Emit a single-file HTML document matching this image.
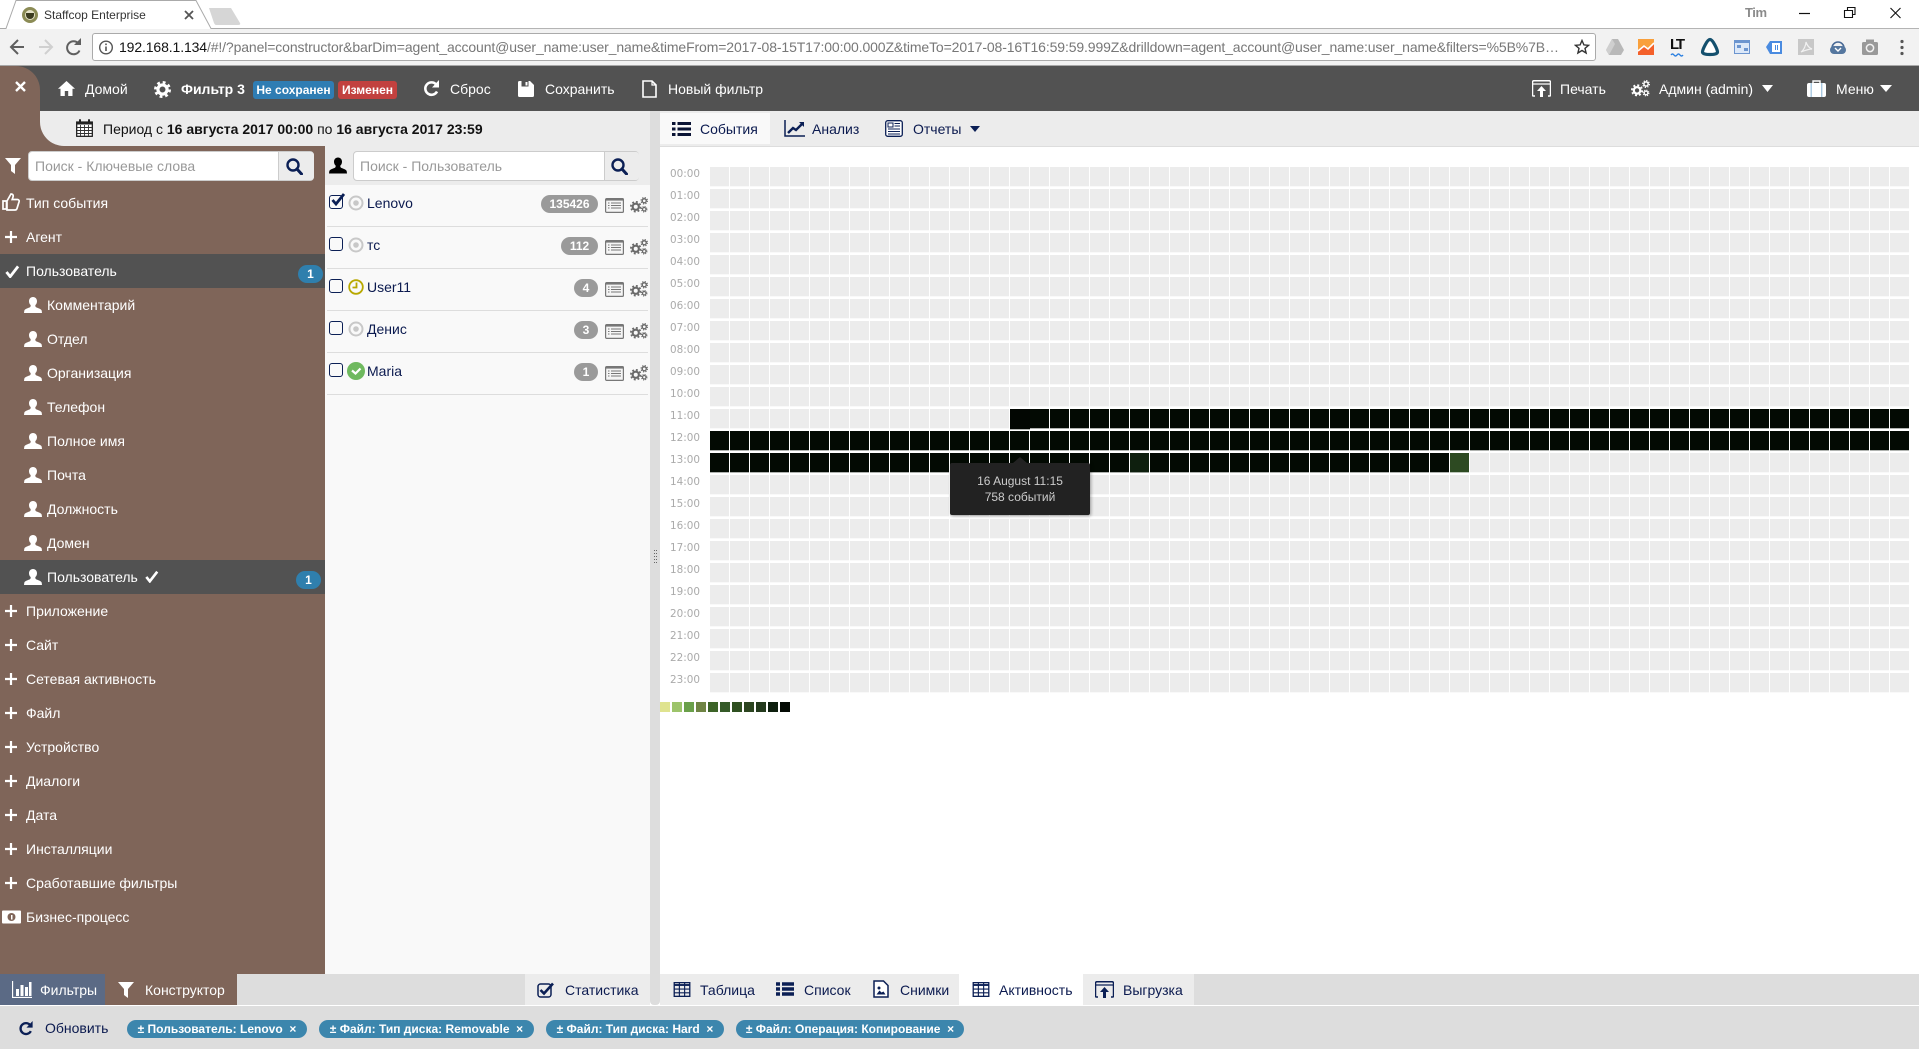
<!DOCTYPE html>
<html lang="ru"><head><meta charset="utf-8"><title>Staffcop Enterprise</title>
<style>
html,body{margin:0;padding:0;width:1919px;height:1049px;overflow:hidden;background:#fff}
body{position:relative;font-family:"Liberation Sans",Arial,sans-serif;font-size:14px;color:#0b1a4f}
.a,.t,svg.i{position:absolute}
.t{white-space:nowrap;line-height:20px;height:20px}
.w{color:#fff}.b{font-weight:bold}
.n{color:#0b1f55}
.s{color:#fff}
.badge{position:absolute;height:18px;line-height:18px;border-radius:3px;color:#fff;font-size:12px;font-weight:bold;text-align:center;top:81px}
.g{position:absolute;height:18px;line-height:19px;background:#9a9a9a;color:#fff;font-size:12px;font-weight:bold;text-align:center;border-radius:9px}
.c{position:absolute;top:1020px;height:18px;line-height:18px;background:#3c86ad;color:#fff;font-size:12px;font-weight:bold;border-radius:9px;text-align:center;white-space:nowrap}
.h{position:absolute;left:670px;color:#aaa;font-family:"DejaVu Sans",sans-serif;font-size:10.4px;line-height:14px;height:14px}
.cb{position:absolute;left:329px;width:12px;height:12px;border:1.5px solid #0b1f55;border-radius:3px}
.sep{position:absolute;left:327px;width:321px;height:1px;background:#ddd}
.ct{position:absolute;left:298px;width:25px;height:18px;line-height:18px;border-radius:9px;background:#2f7fad;color:#fff;font-size:12px;font-weight:bold;text-align:center}
</style></head><body>
<svg width="0" height="0" style="position:absolute"><defs>
<symbol id="user" viewBox="0 0 18 16"><path fill="currentColor" d="M9 0C6.500 0 5 1.900 5 4.200c0 1.600.7 3 1.600 3.800.2.900.1 1.500-.5 2.100C4.700 11.100 1 11.500.3 13.600L0 16h18l-.3-2.400c-.7-2.100-4.400-2.500-5.800-3.500-.6-.6-.7-1.200-.5-2.100.9-.8 1.600-2.200 1.600-3.800C13 1.900 11.500 0 9 0z"/></symbol>
<symbol id="gear" viewBox="0 0 16 16"><circle cx="8" cy="8" r="4.300" fill="none" stroke="currentColor" stroke-width="3"/><circle cx="8" cy="8" r="6.800" fill="none" stroke="currentColor" stroke-width="2.400" stroke-dasharray="2.670 2.670"/></symbol>
<symbol id="gears" viewBox="0 0 18 16"><use href="#gear" x="0" y="4" width="11.500" height="11.500"/><use href="#gear" x="10.500" y="0" width="7.500" height="7.500"/><use href="#gear" x="11" y="9" width="6.500" height="6.500"/></symbol>
<symbol id="search" viewBox="0 0 17 17"><circle cx="7" cy="7" r="5.500" fill="none" stroke="currentColor" stroke-width="2.400"/><path d="M11 11l4.500 5" stroke="currentColor" stroke-width="3" stroke-linecap="round"/></symbol>
<symbol id="funnel" viewBox="0 0 16 16"><path fill="currentColor" d="M0 0h16l-6 7v9l-4-3V7z"/></symbol>
<symbol id="plus" viewBox="0 0 12 12"><path d="M6 0v12M0 6h12" stroke="currentColor" stroke-width="2.200"/></symbol>
<symbol id="check" viewBox="0 0 16 14"><path d="M1.500 7.500l4 5L14 1.500" fill="none" stroke="currentColor" stroke-width="3"/></symbol>
<symbol id="lbox" viewBox="0 0 19 15"><rect x=".6" y=".6" width="17.800" height="13.800" rx="1" fill="#f5f5f5" stroke="#777" stroke-width="1.200"/><rect x=".6" y=".6" width="17.800" height="2" fill="#777"/><path d="M3 5h1.500M3 7.500h1.500M3 10h1.500M6 5h10M6 7.500h10M6 10h10" stroke="#777" stroke-width="1.100"/></symbol>
<symbol id="table" viewBox="0 0 18 16"><rect x=".7" y=".7" width="16.600" height="14.600" fill="none" stroke="currentColor" stroke-width="1.400"/><path d="M.7 3.200h16.600" stroke="currentColor" stroke-width="2"/><path d="M6.200 1v14M11.800 1v14M1 7.500h16M1 11.500h16" stroke="currentColor" stroke-width="1.200"/></symbol>
<symbol id="upl" viewBox="0 0 19 17"><path d="M3 16H1.500A1 1 0 0 1 .5 15V2A1.500 1.500 0 0 1 2 .7h15A1.500 1.500 0 0 1 18.500 2v13a1 1 0 0 1-1 1H16" fill="none" stroke="currentColor" stroke-width="1.500"/><path d="M1 4h17" stroke="currentColor" stroke-width="1.300"/><path fill="currentColor" d="M9.500 6l4.500 5h-3v6H8v-6H5z"/></symbol>
<symbol id="reload" viewBox="0 0 17 17"><path d="M14 11.500A6.200 6.200 0 1 1 13.200 4.500" fill="none" stroke="currentColor" stroke-width="2.600"/><path fill="currentColor" d="M16 0v7.500H9z"/></symbol>
</defs></svg>

<!-- Chrome tab strip -->
<div class="a" style="left:0;top:0;width:1919px;height:29px;background:#fff"></div>
<svg class="i" style="left:0;top:0" width="260" height="30"><path d="M0 28.500h6L16 .5h180l15 28h49" fill="#fff" stroke="#aaa"/><path d="M211 8h22l9 15q1 2-2 2h-22q-1 0-2-2z" fill="#d6d6d6" transform="translate(-2,0)"/><circle cx="30" cy="15" r="8" fill="#8b8b55"/><circle cx="30" cy="15" r="5" fill="#e5e2c8"/><path d="M26 13h8v2a4 4 0 0 1-8 0z" fill="#3c3c20"/><path d="M185 11l8 8M193 11l-8 8" stroke="#555" stroke-width="1.800"/></svg>
<div class="t" style="left:44px;top:5px;font-size:12px;color:#333">Staffcop Enterprise</div>
<div class="a" style="left:260px;top:28px;width:1659px;height:1px;background:#b4b4b4"></div>
<div class="t" style="left:1745px;top:3px;font-size:13px;font-weight:bold;color:#8a8a8a;letter-spacing:-.4px">Tim</div>
<svg class="i" style="left:1790px;top:0" width="129" height="28"><path d="M9 13.500h11" stroke="#111" stroke-width="1.200"/><path d="M54.500 10.500h8v7h-8zM57.500 10.500v-3h7.500v7h-2.500" fill="none" stroke="#111" stroke-width="1.100"/><path d="M100.500 8l10 10M110.500 8l-10 10" stroke="#111" stroke-width="1.100"/></svg>

<!-- Chrome toolbar -->
<div class="a" style="left:0;top:29px;width:1919px;height:36px;background:#f2f2f2"></div>
<div class="a" style="left:0;top:65px;width:1919px;height:1px;background:#a8a8a8"></div>
<svg class="i" style="left:0;top:29px" width="92" height="36"><path d="M24 18H12M18 11l-7 7 7 7" fill="none" stroke="#5f5f5f" stroke-width="2"/><path d="M39 18h12M45 11l7 7-7 7" fill="none" stroke="#d0d0d0" stroke-width="2"/><path d="M79.500 21.500a6.500 6.500 0 1 1-1-7" fill="none" stroke="#5f5f5f" stroke-width="2"/><path d="M81 9v7h-7z" fill="#5f5f5f"/></svg>
<div class="a" style="left:92px;top:33px;width:1502px;height:26px;background:#fff;border:1px solid #aaa;border-radius:3px"></div>
<svg class="i" style="left:96px;top:38px" width="20" height="20"><circle cx="10" cy="9.500" r="6.300" fill="none" stroke="#555" stroke-width="1.400"/><path d="M10 8.500v4.500M10 5.500v1.600" stroke="#555" stroke-width="1.600"/></svg>
<svg class="i" style="left:119px;top:36px" width="1445" height="22"><text x="0" y="16" font-family="Liberation Sans,sans-serif" font-size="14" textLength="1440" lengthAdjust="spacing" fill="#777"><tspan fill="#111">192.168.1.134</tspan>/#!/?panel=constructor&amp;barDim=agent_account@user_name:user_name&amp;timeFrom=2017-08-15T17:00:00.000Z&amp;timeTo=2017-08-16T16:59:59.999Z&amp;drilldown=agent_account@user_name:user_name&amp;filters=%5B%7B…</text></svg>
<svg class="i" style="left:1574px;top:39px" width="16" height="16"><path d="M8 1.500l1.900 4.400 4.700.4-3.600 3.100 1.100 4.600L8 11.500l-4.100 2.500L5 9.400 1.400 6.300l4.700-.4z" fill="none" stroke="#333" stroke-width="1.400"/></svg>
<svg class="i" style="left:1600px;top:34px" width="300" height="28">
 <path d="M12 5h6l6 11-3 5H9l-3-5z" fill="#b8b8b8"/><path d="M12 5l-6 11 3 5 6-11z" fill="#cfcfcf"/>
 <rect x="38" y="5" width="16" height="16" fill="#f4602a"/><path d="M38 5h16v5l-5 5-5-4-6 5z" fill="#f9a03c"/><path d="M38 17l6-5 4 3 6-6" fill="none" stroke="#fff" stroke-width="1.600"/>
 <text x="70" y="15" font-family="Liberation Sans,sans-serif" font-size="15" font-weight="bold" fill="#111" textLength="15">LT</text><path d="M71 21q1.500-2 3 0t3 0 3 0 3 0" fill="none" stroke="#2a7fe0" stroke-width="1.400"/>
 <path d="M110 5.500c3 0 7.500 10.500 7.500 12.500s-4 2.500-7.500 2.500-7.500-.5-7.500-2.500 4.500-12.500 7.500-12.500z" fill="#fff" stroke="#14506e" stroke-width="3.200"/>
 <rect x="134.500" y="6.500" width="15" height="13" fill="#dce8f8" stroke="#6c95cf"/><rect x="134" y="6" width="16" height="3" fill="#6c95cf"/><rect x="137" y="11" width="4" height="3" fill="#6c95cf"/><rect x="144" y="14" width="4" height="3" fill="#6c95cf"/>
 <path d="M166 13l4-6h12v13h-12z" fill="#4a8be0"/><rect x="172" y="9" width="8" height="9" fill="#fff"/><path d="M175 11h1v5h-1zM177 11h1v5h-1z" fill="#4a8be0"/>
 <rect x="198" y="5" width="16" height="16" fill="#c8c8c8"/><path d="M201 18c3-2 5-7 5-10 1 3 3 6 6 7-3 0-6 1-11 3z" fill="none" stroke="#f2f2f2" stroke-width="1.200"/>
 <path d="M232 14a6 6 0 0 1 12 0" fill="none" stroke="#496a96" stroke-width="1.600"/><rect x="230" y="12" width="16" height="8" rx="4" fill="#55779f"/><path d="M235 14l3 3 3-3" stroke="#fff" fill="none" stroke-width="1.400"/>
 <rect x="262" y="8" width="16" height="13" rx="1.500" fill="#999"/><rect x="266" y="5.500" width="8" height="4" fill="#999"/><circle cx="270" cy="14" r="3.600" fill="#999" stroke="#f2f2f2" stroke-width="1.500"/>
</svg>
<svg class="i" style="left:1898px;top:38px" width="8" height="20"><circle cx="4" cy="3.500" r="1.600" fill="#555"/><circle cx="4" cy="9.500" r="1.600" fill="#555"/><circle cx="4" cy="15.500" r="1.600" fill="#555"/></svg>

<!-- App header -->
<div class="a" style="left:0;top:66px;width:1919px;height:45px;background:#525252"></div>
<div class="a" style="left:0;top:66px;width:40px;height:45px;background:#7f6559;border-top-right-radius:24px"></div>
<svg class="i" style="left:15px;top:81px" width="11" height="11"><path d="M1 1l9 9M10 1l-9 9" stroke="#fff" stroke-width="2.400"/></svg>
<svg class="i s" style="left:58px;top:81px" width="17" height="15"><path fill="#fff" d="M8.500 0L17 7.800h-2.500V15H10.200v-5H6.800v5H2.500V7.800H0z"/></svg>
<div class="t s" style="left:85px;top:79px">Домой</div>
<svg class="i s" style="left:154px;top:81px" width="17" height="17"><use href="#gear"/></svg>
<div class="t s b" style="left:181px;top:79px">Фильтр 3</div>
<div class="badge" style="left:253px;width:81px;background:#2f7db3">Не сохранен</div>
<div class="badge" style="left:338px;width:59px;background:#c2413f">Изменен</div>
<svg class="i s" style="left:423px;top:80px" width="17" height="17"><use href="#reload"/></svg>
<div class="t s" style="left:450px;top:79px">Сброс</div>
<svg class="i" style="left:518px;top:81px" width="16" height="16"><path fill="#fff" d="M0 1.500A1.500 1.500 0 0 1 1.500 0H12l4 4v10.500a1.500 1.500 0 0 1-1.500 1.500h-13A1.500 1.500 0 0 1 0 14.500z"/><rect x="3.500" y="0" width="7" height="5.500" fill="#525252"/><rect x="7.500" y="1" width="2" height="3.500" fill="#fff"/></svg>
<div class="t s" style="left:545px;top:79px">Сохранить</div>
<svg class="i" style="left:642px;top:80px" width="15" height="18"><path d="M1 1h9l4 4v12H1z" fill="none" stroke="#fff" stroke-width="1.600"/><path d="M10 1v4h4" fill="none" stroke="#fff" stroke-width="1.200"/></svg>
<div class="t s" style="left:668px;top:79px">Новый фильтр</div>
<svg class="i" style="left:1532px;top:80px;color:#fff" width="19" height="17"><use href="#upl"/></svg>
<div class="t s" style="left:1560px;top:79px">Печать</div>
<svg class="i" style="left:1631px;top:80px;color:#fff" width="19" height="17"><use href="#gears"/></svg>
<div class="t s" style="left:1659px;top:79px">Админ (admin)</div>
<svg class="i" style="left:1762px;top:85px" width="11" height="7"><path d="M0 0h11L5.500 7z" fill="#fff"/></svg>
<svg class="i" style="left:1807px;top:80px" width="19" height="17"><path d="M6 3V1h7v2" fill="none" stroke="#fff" stroke-width="1.400"/><rect x="0" y="3" width="19" height="14" rx="2" fill="#fff"/><rect x="3.500" y="3" width="1.400" height="14" fill="#a8c8e0"/><rect x="14" y="3" width="1.400" height="14" fill="#a8c8e0"/></svg>
<div class="t s" style="left:1836px;top:79px">Меню</div>
<svg class="i" style="left:1880px;top:85px" width="12" height="7"><path d="M0 0h12L6 7z" fill="#fff"/></svg>

<!-- Period bar + sidebar -->
<div class="a" style="left:0;top:111px;width:325px;height:863px;background:#7f6559"></div>
<div class="a" style="left:40px;top:111px;width:610px;height:35px;background:#ececec;border-bottom-left-radius:24px"></div>
<svg class="i" style="left:76px;top:119px" width="17" height="18"><rect x=".7" y="3" width="15.600" height="14.300" fill="#fff" stroke="#111" stroke-width="1.200"/><rect x="1" y="2.500" width="15" height="3" fill="#222"/><rect x="3" y=".3" width="2" height="4" fill="#222"/><rect x="12" y=".3" width="2" height="4" fill="#222"/><path d="M1 8.500h15M1 11.500h15M1 14.500h15M4.500 6v11M8.500 6v11M12.500 6v11" stroke="#333" stroke-width=".9"/></svg>
<div class="t" style="left:103px;top:119px;color:#111">Период с <b>16 августа 2017 00:00</b> по <b>16 августа 2017 23:59</b></div>

<!-- sidebar search -->
<svg class="i" style="left:5px;top:158px;color:#fff" width="16" height="16"><use href="#funnel"/></svg>
<div class="a" style="left:28px;top:151px;width:284px;height:28px;background:#fff;border:1px solid #ccc;border-radius:4px"></div>
<div class="a" style="left:278px;top:152px;width:35px;height:28px;background:#ececec;border-left:1px solid #ccc;border-radius:0 3px 3px 0"></div>
<div class="t" style="left:35px;top:156px;color:#999">Поиск - Ключевые слова</div>
<svg class="i n" style="left:286px;top:158px" width="17" height="17"><use href="#search"/></svg>

<!-- sidebar rows -->
<div class="a" style="left:0;top:254px;width:325px;height:34px;background:#525252"></div>
<div class="a" style="left:0;top:560px;width:325px;height:34px;background:#525252"></div>
<svg class="i" style="left:2px;top:193px" width="18" height="18"><path d="M1 8h3.500v8H1zM5 8l4-7c2 0 2.500 1.500 2 3l-.8 2.500h5.300c1.500 0 2 1.500 1.500 2.500l-2 6.500c-.3 1-1 1.500-2 1.500H5z" fill="none" stroke="#fff" stroke-width="1.700"/></svg>
<div class="t s" style="left:26px;top:193px">Тип события</div>
<svg class="i s" style="left:5px;top:231px" width="12" height="12"><use href="#plus"/></svg>
<div class="t s" style="left:26px;top:227px">Агент</div>
<svg class="i s" style="left:5px;top:265px" width="15" height="13"><use href="#check"/></svg>
<div class="t s" style="left:26px;top:261px">Пользователь</div>
<div class="ct" style="top:265px">1</div>

<svg class="i s" style="left:24px;top:297px" width="18" height="16"><use href="#user"/></svg><div class="t s" style="left:47px;top:295px">Комментарий</div>
<svg class="i s" style="left:24px;top:331px" width="18" height="16"><use href="#user"/></svg><div class="t s" style="left:47px;top:329px">Отдел</div>
<svg class="i s" style="left:24px;top:365px" width="18" height="16"><use href="#user"/></svg><div class="t s" style="left:47px;top:363px">Организация</div>
<svg class="i s" style="left:24px;top:399px" width="18" height="16"><use href="#user"/></svg><div class="t s" style="left:47px;top:397px">Телефон</div>
<svg class="i s" style="left:24px;top:433px" width="18" height="16"><use href="#user"/></svg><div class="t s" style="left:47px;top:431px">Полное имя</div>
<svg class="i s" style="left:24px;top:467px" width="18" height="16"><use href="#user"/></svg><div class="t s" style="left:47px;top:465px">Почта</div>
<svg class="i s" style="left:24px;top:501px" width="18" height="16"><use href="#user"/></svg><div class="t s" style="left:47px;top:499px">Должность</div>
<svg class="i s" style="left:24px;top:535px" width="18" height="16"><use href="#user"/></svg><div class="t s" style="left:47px;top:533px">Домен</div>
<svg class="i s" style="left:24px;top:569px" width="18" height="16"><use href="#user"/></svg><div class="t s" style="left:47px;top:567px">Пользователь</div>
<svg class="i s" style="left:145px;top:570px" width="14" height="13"><use href="#check"/></svg>
<div class="ct" style="top:571px;left:296px">1</div>

<svg class="i s" style="left:5px;top:605px" width="12" height="12"><use href="#plus"/></svg><div class="t s" style="left:26px;top:601px">Приложение</div>
<svg class="i s" style="left:5px;top:639px" width="12" height="12"><use href="#plus"/></svg><div class="t s" style="left:26px;top:635px">Сайт</div>
<svg class="i s" style="left:5px;top:673px" width="12" height="12"><use href="#plus"/></svg><div class="t s" style="left:26px;top:669px">Сетевая активность</div>
<svg class="i s" style="left:5px;top:707px" width="12" height="12"><use href="#plus"/></svg><div class="t s" style="left:26px;top:703px">Файл</div>
<svg class="i s" style="left:5px;top:741px" width="12" height="12"><use href="#plus"/></svg><div class="t s" style="left:26px;top:737px">Устройство</div>
<svg class="i s" style="left:5px;top:775px" width="12" height="12"><use href="#plus"/></svg><div class="t s" style="left:26px;top:771px">Диалоги</div>
<svg class="i s" style="left:5px;top:809px" width="12" height="12"><use href="#plus"/></svg><div class="t s" style="left:26px;top:805px">Дата</div>
<svg class="i s" style="left:5px;top:843px" width="12" height="12"><use href="#plus"/></svg><div class="t s" style="left:26px;top:839px">Инсталляции</div>
<svg class="i s" style="left:5px;top:877px" width="12" height="12"><use href="#plus"/></svg><div class="t s" style="left:26px;top:873px">Сработавшие фильтры</div>
<svg class="i" style="left:2px;top:910px" width="19" height="14"><rect width="19" height="13" y=".5" rx="1" fill="#fff"/><circle cx="9.500" cy="7" r="4" fill="#7f6559"/><rect x="9" y="5" width="1.500" height="4.500" fill="#fff"/></svg><div class="t s" style="left:26px;top:907px">Бизнес-процесс</div>

<!-- middle panel -->
<div class="a" style="left:325px;top:146px;width:325px;height:828px;background:#f9f9f9"></div>
<div class="a" style="left:325px;top:146px;width:325px;height:39px;background:#ececec"></div>
<svg class="i" style="left:329px;top:157px;color:#000" width="18" height="17"><use href="#user"/></svg>
<div class="a" style="left:353px;top:151px;width:284px;height:28px;background:#fff;border:1px solid #ccc;border-radius:4px"></div>
<div class="a" style="left:604px;top:152px;width:34px;height:28px;background:#ececec;border-left:1px solid #ccc;border-radius:0 3px 3px 0"></div>
<div class="t" style="left:360px;top:156px;color:#999">Поиск - Пользователь</div>
<svg class="i n" style="left:611px;top:158px" width="17" height="17"><use href="#search"/></svg>

<div class="sep" style="top:226px"></div><div class="sep" style="top:268px"></div><div class="sep" style="top:310px"></div><div class="sep" style="top:352px"></div><div class="sep" style="top:394px"></div>

<div class="cb" style="top:195px"></div>
<svg class="i" style="left:331px;top:192px" width="15" height="14"><path d="M1.500 8l3.500 4L13 2" fill="none" stroke="#0b1f55" stroke-width="2.800"/></svg>
<svg class="i" style="left:348px;top:195px" width="16" height="16"><circle cx="8" cy="8" r="6.500" fill="none" stroke="#c8c8c8" stroke-width="2"/><circle cx="8" cy="8" r="2.800" fill="#c8c8c8"/></svg>
<div class="t" style="left:367px;top:193px">Lenovo</div>
<div class="g" style="left:541px;top:195px;width:57px">135426</div>
<svg class="i" style="left:605px;top:198px" width="19" height="15"><use href="#lbox"/></svg>
<svg class="i" style="left:630px;top:197px;color:#6a6a6a" width="18" height="16"><use href="#gears"/></svg>

<div class="cb" style="top:237px"></div>
<svg class="i" style="left:348px;top:237px" width="16" height="16"><circle cx="8" cy="8" r="6.500" fill="none" stroke="#c8c8c8" stroke-width="2"/><circle cx="8" cy="8" r="2.800" fill="#c8c8c8"/></svg>
<div class="t" style="left:367px;top:235px">тс</div>
<div class="g" style="left:561px;top:237px;width:37px">112</div>
<svg class="i" style="left:605px;top:240px" width="19" height="15"><use href="#lbox"/></svg>
<svg class="i" style="left:630px;top:239px;color:#6a6a6a" width="18" height="16"><use href="#gears"/></svg>

<div class="cb" style="top:279px"></div>
<svg class="i" style="left:348px;top:279px" width="16" height="16"><circle cx="8" cy="8" r="6.800" fill="none" stroke="#b8a800" stroke-width="1.800"/><path d="M8.500 3.500V8.500H4.500" fill="none" stroke="#b8a800" stroke-width="1.800"/></svg>
<div class="t" style="left:367px;top:277px">User11</div>
<div class="g" style="left:574px;top:279px;width:24px">4</div>
<svg class="i" style="left:605px;top:282px" width="19" height="15"><use href="#lbox"/></svg>
<svg class="i" style="left:630px;top:281px;color:#6a6a6a" width="18" height="16"><use href="#gears"/></svg>

<div class="cb" style="top:321px"></div>
<svg class="i" style="left:348px;top:321px" width="16" height="16"><circle cx="8" cy="8" r="6.500" fill="none" stroke="#c8c8c8" stroke-width="2"/><circle cx="8" cy="8" r="2.800" fill="#c8c8c8"/></svg>
<div class="t" style="left:367px;top:319px">Денис</div>
<div class="g" style="left:574px;top:321px;width:24px">3</div>
<svg class="i" style="left:605px;top:324px" width="19" height="15"><use href="#lbox"/></svg>
<svg class="i" style="left:630px;top:323px;color:#6a6a6a" width="18" height="16"><use href="#gears"/></svg>

<div class="cb" style="top:363px"></div>
<svg class="i" style="left:347px;top:362px" width="18" height="18"><circle cx="9" cy="9" r="9" fill="#6fb95f"/><path d="M5 8.500l3.500 3 5-5" fill="none" stroke="#fff" stroke-width="2.200"/></svg>
<div class="t" style="left:367px;top:361px">Maria</div>
<div class="g" style="left:574px;top:363px;width:24px">1</div>
<svg class="i" style="left:605px;top:366px" width="19" height="15"><use href="#lbox"/></svg>
<svg class="i" style="left:630px;top:365px;color:#6a6a6a" width="18" height="16"><use href="#gears"/></svg>

<!-- splitter -->
<div class="a" style="left:650px;top:111px;width:10px;height:894px;background:#ddd;border-radius:0 0 4px 4px"></div>
<svg class="i" style="left:654px;top:550px" width="3" height="14"><path d="M0 .5h3M0 3.500h3M0 6.500h3M0 9.500h3M0 12.500h3" stroke="#666" stroke-width="1" stroke-dasharray="1 1"/></svg>

<!-- right tab bar -->
<div class="a" style="left:660px;top:111px;width:1259px;height:35px;background:#ececec"></div>
<div class="a" style="left:660px;top:146px;width:1259px;height:1px;background:#ddd"></div>
<div class="a" style="left:660px;top:113px;width:110px;height:31px;background:#f9f9f9"></div>
<svg class="i" style="left:672px;top:122px" width="19" height="14"><path d="M0 1.500h3.500M5.500 1.500H19M0 7h3.500M5.500 7H19M0 12.500h3.500M5.500 12.500H19" stroke="#0b1435" stroke-width="3"/></svg>
<div class="t" style="left:700px;top:119px">События</div>
<svg class="i n" style="left:784px;top:120px" width="21" height="17"><path d="M1 0v16h20" fill="none" stroke="currentColor" stroke-width="1.500"/><path d="M4 13l5-5 3 2 6-6" fill="none" stroke="currentColor" stroke-width="2.400"/><path d="M15 2h5v5z" fill="currentColor"/></svg>
<div class="t" style="left:812px;top:119px">Анализ</div>
<svg class="i" style="left:885px;top:120px" width="18" height="17"><rect x=".7" y=".7" width="16.600" height="15.600" rx="2" fill="#fff" stroke="#0b1f55" stroke-width="1.300"/><rect x="3" y="3" width="5" height="4" fill="none" stroke="#0b1f55"/><path d="M9.500 3.500H15M9.500 6H15M3 9h12M3 11.500h12M3 14h12" stroke="#0b1f55"/></svg>
<div class="t" style="left:913px;top:119px">Отчеты</div>
<svg class="i" style="left:970px;top:126px" width="10" height="6"><path d="M0 0h10L5 6z" fill="#0b1f55"/></svg>

<!-- activity grid -->
<svg class="i" style="left:710px;top:167px" width="1200" height="528">
<defs>
<pattern id="pl" width="20" height="22" patternUnits="userSpaceOnUse"><rect width="19" height="19.300" fill="#ececec"/></pattern>
<pattern id="pd" width="20" height="22" patternUnits="userSpaceOnUse"><rect width="19" height="19.300" fill="#030a03"/></pattern>
</defs>
<rect width="1200" height="528" fill="url(#pl)"/>
<rect x="300" y="242" width="900" height="22" fill="url(#pd)"/>
<rect x="0" y="264" width="1200" height="22" fill="url(#pd)"/>
<rect x="0" y="286" width="740" height="22" fill="url(#pd)"/>
<rect x="300" y="242" width="20" height="20.300" fill="#020602"/>
<rect x="420" y="286" width="19" height="19.300" fill="#0e1f0e"/>
<rect x="740" y="286" width="19" height="19.300" fill="#2d4a22"/>
</svg>
<div class="h" style="top:167px">00:00</div><div class="h" style="top:189px">01:00</div><div class="h" style="top:211px">02:00</div><div class="h" style="top:233px">03:00</div><div class="h" style="top:255px">04:00</div><div class="h" style="top:277px">05:00</div><div class="h" style="top:299px">06:00</div><div class="h" style="top:321px">07:00</div><div class="h" style="top:343px">08:00</div><div class="h" style="top:365px">09:00</div><div class="h" style="top:387px">10:00</div><div class="h" style="top:409px">11:00</div><div class="h" style="top:431px">12:00</div><div class="h" style="top:453px">13:00</div><div class="h" style="top:475px">14:00</div><div class="h" style="top:497px">15:00</div><div class="h" style="top:519px">16:00</div><div class="h" style="top:541px">17:00</div><div class="h" style="top:563px">18:00</div><div class="h" style="top:585px">19:00</div><div class="h" style="top:607px">20:00</div><div class="h" style="top:629px">21:00</div><div class="h" style="top:651px">22:00</div><div class="h" style="top:673px">23:00</div>

<!-- tooltip -->
<div class="a" style="left:950px;top:463px;width:140px;height:52px;background:#222;border-radius:2px;box-shadow:1px 1px 3px rgba(0,0,0,.35);color:#ccc;font-size:12px;line-height:16px;text-align:center;padding-top:10px;box-sizing:border-box">16 August 11:15<br>758 событий</div>
<svg class="i" style="left:1013px;top:457px" width="14" height="6"><path d="M0 6L7 0l7 6z" fill="#222"/></svg>

<!-- legend -->
<svg class="i" style="left:660px;top:702px" width="132" height="10"><rect x="0" width="10" height="10" fill="#dfe38f"/><rect x="12" width="10" height="10" fill="#9dc46b"/><rect x="24" width="10" height="10" fill="#6aa04a"/><rect x="36" width="10" height="10" fill="#6f8444"/><rect x="48" width="10" height="10" fill="#3d6428"/><rect x="60" width="10" height="10" fill="#355a28"/><rect x="72" width="10" height="10" fill="#2f5021"/><rect x="84" width="10" height="10" fill="#2c4520"/><rect x="96" width="10" height="10" fill="#243a1d"/><rect x="108" width="10" height="10" fill="#0e1f0e"/><rect x="120" width="10" height="10" fill="#040a04"/></svg>

<!-- bottom tabs -->
<div class="a" style="left:0;top:974px;width:650px;height:31px;background:#ddd"></div>
<div class="a" style="left:660px;top:974px;width:1259px;height:31px;background:#ddd"></div>
<div class="a" style="left:0;top:974px;width:105px;height:31px;background:#5b6a85"></div>
<div class="a" style="left:105px;top:974px;width:132px;height:31px;background:#7f6559"></div>
<div class="a" style="left:525px;top:974px;width:125px;height:31px;background:#ececec"></div>
<div class="a" style="left:660px;top:974px;width:299px;height:31px;background:#ececec"></div>
<div class="a" style="left:959px;top:974px;width:124px;height:31px;background:#fff"></div>
<div class="a" style="left:1083px;top:974px;width:111px;height:31px;background:#ececec"></div>
<svg class="i" style="left:12px;top:981px" width="20" height="17"><path d="M.5 0v16.500H20" fill="none" stroke="#fff" stroke-width="1.300"/><path d="M4 8h3v7H4zM8.500 4h3v11h-3zM13 6h3v9h-3zM17 1h2.500v14H17z" fill="#fff"/></svg>
<div class="t s" style="left:40px;top:980px">Фильтры</div>
<svg class="i s" style="left:118px;top:982px" width="16" height="16"><use href="#funnel"/></svg>
<div class="t s" style="left:145px;top:980px">Конструктор</div>
<svg class="i" style="left:537px;top:981px" width="18" height="17"><rect x="1" y="3" width="13" height="13" rx="2.500" fill="none" stroke="#0b1f55" stroke-width="1.500"/><path d="M3.500 9l3.500 3.500L16 2.500" fill="none" stroke="#0b1f55" stroke-width="2.600"/></svg>
<div class="t" style="left:565px;top:980px">Статистика</div>
<svg class="i n" style="left:673px;top:982px" width="18" height="15"><use href="#table"/></svg>
<div class="t" style="left:700px;top:980px">Таблица</div>
<svg class="i" style="left:776px;top:982px" width="18" height="14"><path d="M0 2h4M6 2h12M0 7h4M6 7h12M0 12h4M6 12h12" stroke="#0b1f55" stroke-width="3.400"/></svg>
<div class="t" style="left:804px;top:980px">Список</div>
<svg class="i" style="left:873px;top:980px" width="16" height="18"><path d="M1 1h9.500L15 5.500V17H1z" fill="#fff" stroke="#0b1f55" stroke-width="1.500"/><path d="M3.500 14.500l3-4 2 2 2-1 2 3z" fill="#0b1f55"/><circle cx="6" cy="8" r="1.500" fill="#0b1f55"/></svg>
<div class="t" style="left:900px;top:980px">Снимки</div>
<svg class="i n" style="left:972px;top:982px" width="18" height="15"><use href="#table"/></svg>
<div class="t" style="left:999px;top:980px">Активность</div>
<svg class="i n" style="left:1095px;top:981px" width="19" height="17"><use href="#upl"/></svg>
<div class="t" style="left:1123px;top:980px">Выгрузка</div>

<!-- footer -->
<div class="a" style="left:0;top:1006px;width:1919px;height:43px;background:#ddd"></div>
<svg class="i n" style="left:18px;top:1021px" width="16" height="15"><use href="#reload"/></svg>
<div class="t" style="left:45px;top:1018px">Обновить</div>
<div class="c" style="left:127px;width:180px">± Пользователь: Lenovo&nbsp; ×</div>
<div class="c" style="left:319px;width:215px">± Файл: Тип диска: Removable&nbsp; ×</div>
<div class="c" style="left:546px;width:178px">± Файл: Тип диска: Hard&nbsp; ×</div>
<div class="c" style="left:736px;width:228px">± Файл: Операция: Копирование&nbsp; ×</div>
</body></html>
